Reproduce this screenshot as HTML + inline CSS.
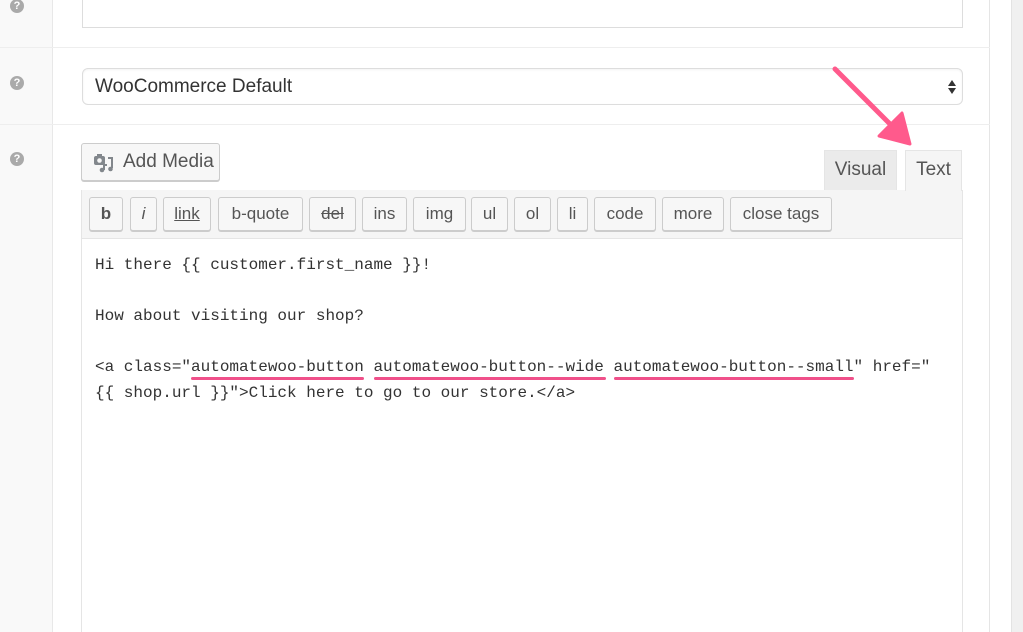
<!DOCTYPE html>
<html style="width:1023px;height:632px;overflow:hidden"><head><meta charset="utf-8"><style>
*{box-sizing:border-box;margin:0;padding:0}
body{width:1023px;height:632px;overflow:hidden;background:#fff;font-family:"Liberation Sans",Helvetica,Arial,sans-serif;position:relative;color:#333}
.abs{position:absolute}
.left{left:0;top:0;width:53px;height:632px;background:#f9f9f9;border-right:1px solid #e8e8e8}
.hr{left:0;width:990px;height:1px;background:#eee}
.q{left:10px;width:14px;height:14px;border-radius:50%;background:#aaa;color:#fff;font-size:11px;font-weight:bold;text-align:center;line-height:14px}
.btn{position:absolute;top:197px;height:34px;border:1px solid #ccc;border-radius:3px;background:#f7f7f7;box-shadow:0 1px 0 #ccc;font-size:17px;color:#555;text-align:center;line-height:31px}
.code{position:absolute;left:95px;font-family:"Liberation Mono",monospace;font-size:16px;color:#333;white-space:pre;line-height:25.5px}
.ul{position:absolute;height:3px;background:#f0508a;border-radius:2px;top:377px}
</style></head><body>
<div class="abs left"></div>
<div class="abs" style="left:989px;top:0;width:1px;height:632px;background:#e5e5e5"></div>
<div class="abs" style="left:1011px;top:0;width:12px;height:632px;background:#f0f0f0;border-left:1px solid #e3e3e3"></div>
<div class="abs hr" style="top:47px"></div>
<div class="abs hr" style="top:124px"></div>
<div class="abs q" style="top:-1px">?</div>
<div class="abs q" style="top:76px">?</div>
<div class="abs q" style="top:152px">?</div>
<div class="abs" style="left:82px;top:-5px;width:881px;height:33px;border:1px solid #ddd;background:#fff"></div>
<div class="abs" style="left:82px;top:68px;width:881px;height:37px;border:1px solid #ddd;border-radius:6px;background:#fff;box-shadow:inset 0 1px 2px rgba(0,0,0,.05);font-size:19px;line-height:35px;padding-left:12px;color:#333">WooCommerce Default
<svg class="abs" style="right:5px;top:10px" width="10" height="16"><path d="M5 1L9 7H1Z M5 15L9 9H1Z" fill="#333"/></svg></div>
<div class="abs" style="left:81px;top:143px;width:139px;height:38px;border:1px solid #ccc;border-radius:3px;background:#f7f7f7;box-shadow:0 1px 0 #ccc;font-size:19px;color:#555;line-height:36px;padding-left:41px">Add Media
<svg class="abs" style="left:11px;top:9px" width="22" height="20"><rect x="1" y="3" width="11" height="9" rx="2" fill="#82878c"/><rect x="4" y="1" width="5" height="3" fill="#82878c"/><circle cx="6.5" cy="7.5" r="2.3" fill="#f7f7f7"/><path d="M15 5h4v10" stroke="#82878c" stroke-width="2" fill="none"/><circle cx="17.5" cy="16" r="2.3" fill="#82878c"/><circle cx="9" cy="17" r="2.3" fill="#82878c"/><path d="M11 17V12h3" stroke="#82878c" stroke-width="2" fill="none"/></svg></div>
<div class="abs" style="left:824px;top:150px;width:73px;height:40px;background:#ebebeb;border:1px solid #e5e5e5;border-bottom:none;font-size:19px;color:#555;text-align:center;line-height:38px">Visual</div>
<div class="abs" style="left:905px;top:150px;width:57px;height:41px;background:#f5f5f5;border:1px solid #e5e5e5;border-bottom:none;font-size:19px;color:#555;text-align:center;line-height:38px;z-index:2">Text</div>
<div class="abs" style="left:81px;top:190px;width:882px;height:450px;border:1px solid #e5e5e5;background:#fff"></div>
<div class="abs" style="left:82px;top:190px;width:880px;height:49px;background:#f5f5f5;border-bottom:1px solid #e5e5e5"></div>
<div class="btn" style="left:89px;width:34px;font-weight:bold">b</div>
<div class="btn" style="left:130px;width:27px;font-style:italic">i</div>
<div class="btn" style="left:163px;width:48px;text-decoration:underline">link</div>
<div class="btn" style="left:218px;width:85px">b-quote</div>
<div class="btn" style="left:309px;width:47px;text-decoration:line-through">del</div>
<div class="btn" style="left:362px;width:45px">ins</div>
<div class="btn" style="left:413px;width:53px">img</div>
<div class="btn" style="left:471px;width:37px">ul</div>
<div class="btn" style="left:514px;width:37px">ol</div>
<div class="btn" style="left:557px;width:31px">li</div>
<div class="btn" style="left:594px;width:62px">code</div>
<div class="btn" style="left:662px;width:62px">more</div>
<div class="btn" style="left:730px;width:102px">close tags</div>
<div class="code" style="top:253px">Hi there {{ customer.first_name }}!</div>
<div class="code" style="top:304px">How about visiting our shop?</div>
<div class="code" style="top:355px">&lt;a class="automatewoo-button automatewoo-button--wide automatewoo-button--small" href="
{{ shop.url }}"&gt;Click here to go to our store.&lt;/a&gt;</div>
<div class="ul" style="left:191px;width:173px"></div>
<div class="ul" style="left:374px;width:232px"></div>
<div class="ul" style="left:614px;width:240px"></div>
<svg class="abs" style="left:0;top:0;z-index:3" width="1023" height="632"><path d="M835 69L890 124" stroke="#ff5a8c" stroke-width="5" stroke-linecap="round"/><path d="M910 144L879 136L902 113Z" fill="#ff5a8c" stroke="#ff5a8c" stroke-width="3" stroke-linejoin="round"/></svg>
</body></html>
